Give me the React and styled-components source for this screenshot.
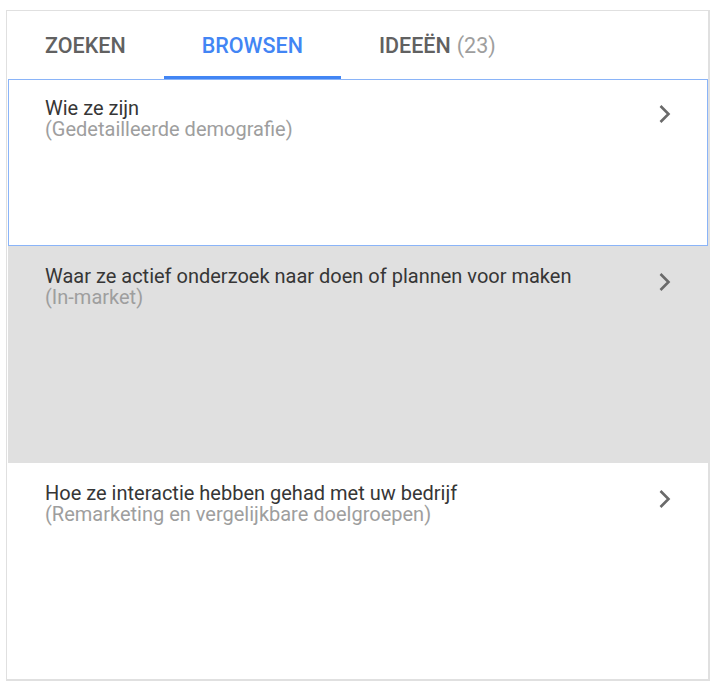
import styled, { createGlobalStyle } from 'styled-components'

const GlobalStyle = createGlobalStyle`
  body {
    margin: 0;
    background: #fff;
    font-family: Roboto, "Liberation Sans", sans-serif;
  }
`

const Page = styled.div`
  padding: 10px 0 0 6px;
`

const Panel = styled.div`
  width: 704px;
  border: 1px solid #e0e0e0;
  border-right-width: 2px;
  border-bottom-width: 2px;
  display: flex;
  flex-direction: column;
  box-sizing: border-box;
`

const TabBar = styled.div`
  display: flex;
  height: 68px;
  align-items: stretch;
`

const Tab = styled.div`
  position: relative;
  padding: 0 38px;
  display: flex;
  align-items: center;
  font-size: 21.5px;
  font-weight: 500;
  color: ${p => (p.active ? '#4285f4' : '#616161')};
  &::after {
    content: '';
    display: ${p => (p.active ? 'block' : 'none')};
    position: absolute;
    left: 0;
    right: 0;
    bottom: 0;
    height: 3px;
    background: #4285f4;
  }
`

const Count = styled.span`
  font-weight: 400;
  color: #9e9e9e;
  margin-left: 6px;
`

const List = styled.div`
  display: flex;
  flex-direction: column;
  padding-left: 1px;
`

const Row = styled.div`
  height: ${p => p.h}px;
  box-sizing: border-box;
  display: flex;
  justify-content: space-between;
  align-items: flex-start;
  padding: ${p => (p.selected ? '17px 35px 0 36px' : '19px 36px 0 37px')};
  background: ${p => (p.grey ? '#e0e0e0' : '#fff')};
  border: ${p => (p.selected ? '1px solid #8ab4f8' : 'none')};
`

const Texts = styled.div`
  display: flex;
  flex-direction: column;
  gap: 1px;
`

const Title = styled.div`
  font-size: 20px;
  line-height: 20px;
  padding-top: 1px;
  color: #363636;
`

const Sub = styled.div`
  font-size: 20px;
  line-height: 20px;
  color: #9e9e9e;
`

const ChevronIcon = styled.svg`
  margin-top: 7px;
  flex-shrink: 0;
`

const Chevron = () => (
  <ChevronIcon width="14" height="20" viewBox="0 0 14 20">
    <path d="M2.5 2l8 8-8 8" fill="none" stroke="#6a6a6a" strokeWidth="2.6" />
  </ChevronIcon>
)

const rows = [
  { title: 'Wie ze zijn', sub: '(Gedetailleerde demografie)', h: 167, selected: true },
  { title: 'Waar ze actief onderzoek naar doen of plannen voor maken', sub: '(In-market)', h: 217, grey: true },
  { title: 'Hoe ze interactie hebben gehad met uw bedrijf', sub: '(Remarketing en vergelijkbare doelgroepen)', h: 216 }
]

export default function App() {
  return (
    <Page>
      <GlobalStyle />
      <Panel>
        <TabBar>
          <Tab>ZOEKEN</Tab>
          <Tab active>BROWSEN</Tab>
          <Tab>IDEEËN<Count>(23)</Count></Tab>
        </TabBar>
        <List>
          {rows.map(r => (
            <Row key={r.title} h={r.h} selected={r.selected} grey={r.grey}>
              <Texts>
                <Title>{r.title}</Title>
                <Sub>{r.sub}</Sub>
              </Texts>
              <Chevron />
            </Row>
          ))}
        </List>
      </Panel>
    </Page>
  )
}
